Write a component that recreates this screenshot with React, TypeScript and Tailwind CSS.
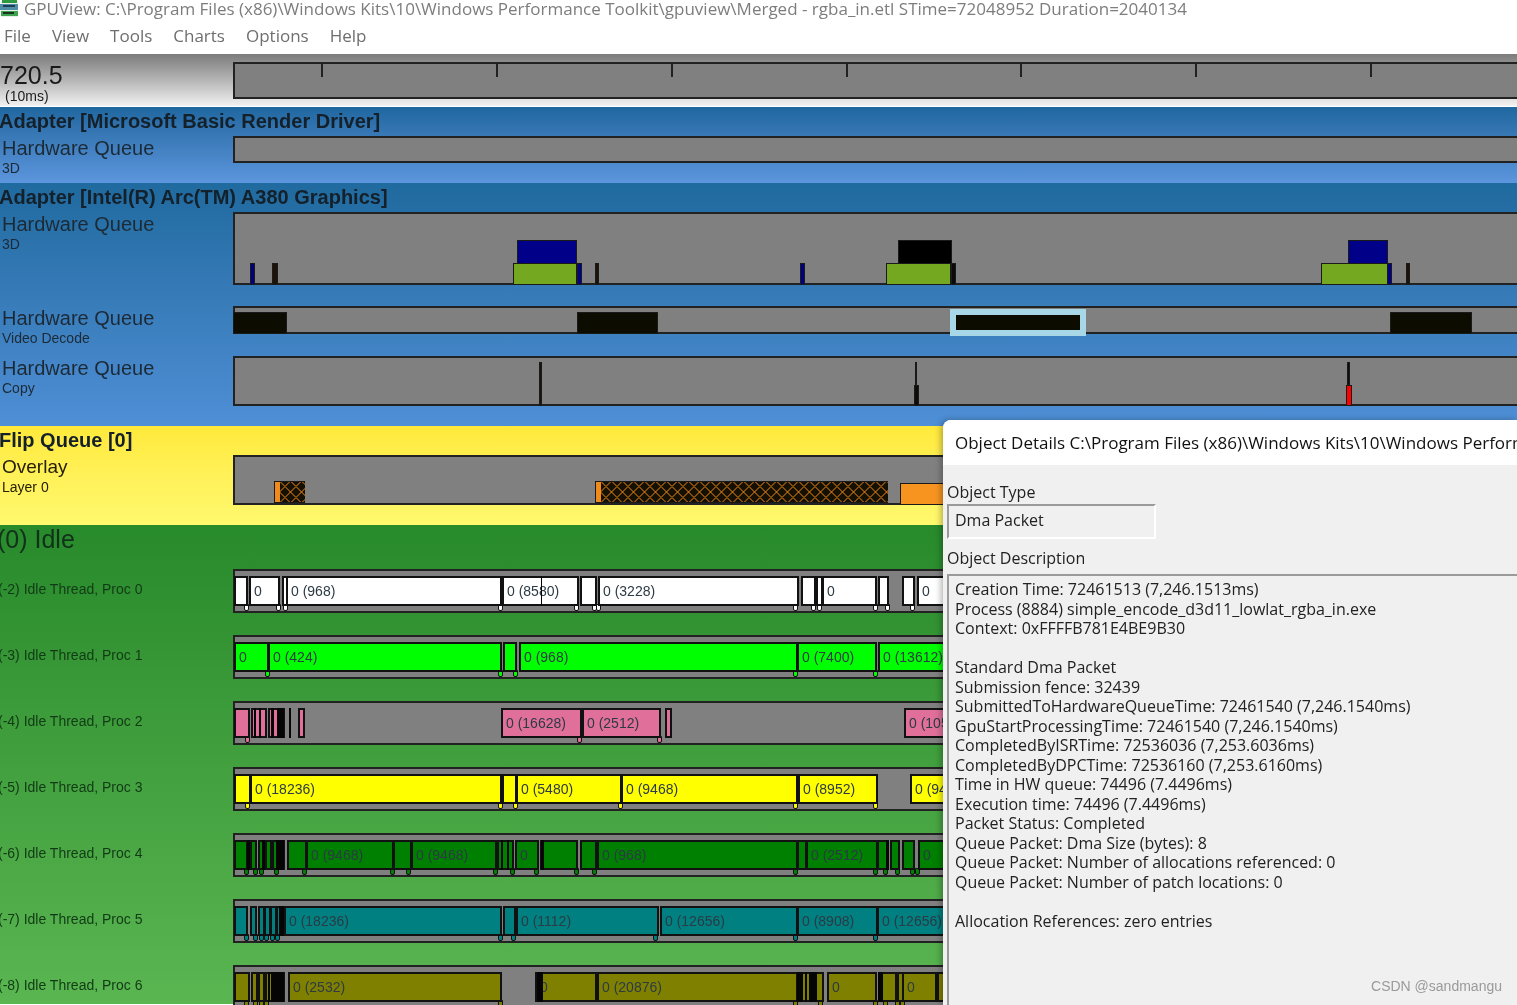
const SANS = "font-['Liberation_Sans',Arial,sans-serif]";
const UI = "font-['Open_Sans','Noto_Sans',sans-serif]";

type Seg = [number, number, string?];

const ticks = [322, 497, 672, 847, 1021, 1196, 1371];

const idleRows: {
  name: string;
  color: string;
  segs: Seg[];
  bars: [number, number][];
  marks: number[];
}[] = [
  {
    name: "(-2) Idle Thread, Proc 0",
    color: "#ffffff",
    segs: [
      [234, 247],
      [249, 279, "0"],
      [282, 285],
      [286, 501, "0 (968)"],
      [502, 578, "0 (8580)"],
      [580, 596],
      [598, 798, "0 (3228)"],
      [801, 815],
      [816, 821],
      [822, 876, "0"],
      [878, 888],
      [902, 914],
      [917, 960, "0"],
    ],
    bars: [[541, 542]],
    marks: [246, 278, 285, 500, 576, 594, 598, 795, 813, 819, 875, 887, 912],
  },
  {
    name: "(-3) Idle Thread, Proc 1",
    color: "#00ff00",
    segs: [
      [234, 268, "0"],
      [268, 501, "0 (424)"],
      [503, 516],
      [519, 797, "0 (968)"],
      [797, 876, "0 (7400)"],
      [878, 960, "0 (13612)"],
    ],
    bars: [],
    marks: [267, 500, 515, 795, 875],
  },
  {
    name: "(-4) Idle Thread, Proc 2",
    color: "#e0709a",
    segs: [
      [234, 249],
      [251, 266],
      [268, 284],
      [298, 302],
      [501, 581, "0 (16628)"],
      [582, 660, "0 (2512)"],
      [665, 669],
      [904, 960, "0 (10536)"],
    ],
    bars: [
      [254, 256],
      [259, 261],
      [271, 274],
      [277, 284],
      [289, 291],
    ],
    marks: [247, 579, 659],
  },
  {
    name: "(-5) Idle Thread, Proc 3",
    color: "#ffff00",
    segs: [
      [234, 250],
      [250, 501, "0 (18236)"],
      [502, 516],
      [516, 621, "0 (5480)"],
      [621, 797, "0 (9468)"],
      [798, 877, "0 (8952)"],
      [910, 960, "0 (9468)"],
    ],
    bars: [],
    marks: [247, 500, 515, 620, 795, 875],
  },
  {
    name: "(-6) Idle Thread, Proc 4",
    color: "#008000",
    segs: [
      [234, 247],
      [250, 256],
      [258, 263],
      [265, 270],
      [272, 284],
      [287, 306],
      [306, 393, "0 (9468)"],
      [393, 411],
      [411, 496, "0 (9468)"],
      [497, 513],
      [515, 538, "0"],
      [540, 577],
      [580, 596],
      [597, 797, "0 (968)"],
      [797, 806],
      [806, 877, "0 (2512)"],
      [877, 888],
      [890, 899],
      [902, 914],
      [918, 960, "0"],
    ],
    bars: [
      [247, 250],
      [262, 265],
      [276, 284],
      [501, 503],
      [507, 509],
      [541, 544],
      [886, 889],
    ],
    marks: [246, 255, 261, 276, 304, 392, 408, 495, 512, 536, 576, 594, 795, 875, 885, 897, 912, 917],
  },
  {
    name: "(-7) Idle Thread, Proc 5",
    color: "#008080",
    segs: [
      [234, 247],
      [250, 256],
      [258, 263],
      [264, 269],
      [270, 275],
      [276, 279],
      [284, 501, "0 (18236)"],
      [503, 515],
      [516, 658, "0 (1112)"],
      [660, 797, "0 (12656)"],
      [797, 877, "0 (8908)"],
      [877, 960, "0 (12656)"],
    ],
    bars: [[279, 284]],
    marks: [246, 255, 261, 266, 272, 277, 500, 513, 655, 795, 875],
  },
  {
    name: "(-8) Idle Thread, Proc 6",
    color: "#808000",
    segs: [
      [234, 249],
      [251, 256],
      [258, 263],
      [265, 284],
      [288, 501, "0 (2532)"],
      [535, 596, "0"],
      [597, 797, "0 (20876)"],
      [797, 823],
      [827, 876, "0"],
      [878, 896],
      [897, 902],
      [902, 936, "0"],
      [937, 960],
    ],
    bars: [
      [268, 270],
      [271, 284],
      [537, 543],
      [797, 803],
      [805, 807],
      [809, 817],
      [878, 883],
    ],
    marks: [246, 255, 261, 266, 500, 795, 820, 875, 885, 897, 902],
  },
];

const details = [
  "Creation Time: 72461513 (7,246.1513ms)",
  "Process (8884) simple_encode_d3d11_lowlat_rgba_in.exe",
  "Context: 0xFFFFB781E4BE9B30",
  "",
  "Standard Dma Packet",
  "Submission fence: 32439",
  "SubmittedToHardwareQueueTime: 72461540 (7,246.1540ms)",
  "GpuStartProcessingTime: 72461540 (7,246.1540ms)",
  "CompletedByISRTime: 72536036 (7,253.6036ms)",
  "CompletedByDPCTime: 72536160 (7,253.6160ms)",
  "Time in HW queue: 74496 (7.4496ms)",
  "Execution time: 74496 (7.4496ms)",
  "Packet Status: Completed",
  "Queue Packet: Dma Size (bytes): 8",
  "Queue Packet: Number of allocations referenced: 0",
  "Queue Packet: Number of patch locations: 0",
  "",
  "Allocation References: zero entries",
];

// x positions in the data are page coordinates, tracks start at 233
const Block = ({ x0, x1, top, bottom, color, className = "" }: { x0: number; x1: number; top: number; bottom: number; color: string; className?: string }) => (
  <div
    className={`absolute border border-[#1a1a1a] ${className}`}
    style={{ left: x0 - 235, width: x1 - x0, top, height: bottom - top, background: color }}
  />
);

const Hatch = ({ x0, x1 }: { x0: number; x1: number }) => (
  <svg className="absolute bottom-0" style={{ left: x0 - 235, width: x1 - x0 }} height="22">
    <defs>
      <pattern id={`hatch-${x0}`} width="11" height="11" patternUnits="userSpaceOnUse">
        <rect width="11" height="11" fill="#151000" />
        <path d="M0 5.5L5.5 0L11 5.5L5.5 11Z" fill="none" stroke="#f08a1c" strokeWidth="1" />
      </pattern>
    </defs>
    <rect width="100%" height="100%" fill={`url(#hatch-${x0})`} />
    <rect x="1" y="1" width="5" height="20" fill="#f08a1c" />
    <rect x="0.5" y="0.5" width="100%" height="21" fill="none" stroke="#1a1a1a" />
  </svg>
);

const Track = ({ height, children }: { height: number; children?: React.ReactNode }) => (
  <div className="relative ml-[233px] border-2 border-[#222] border-r-0 bg-[#808080]" style={{ height }}>
    {children}
  </div>
);

const Section = ({ title, className, children }: { title: string; className: string; children: React.ReactNode }) => (
  <div className={`relative overflow-hidden ${className}`}>
    <div className={`${SANS} -ml-px text-[20px] leading-[24px] font-bold text-[#14202a]`}>{title}</div>
    {children}
  </div>
);

const Label = ({ main, sub }: { main: string; sub: string }) => (
  <div className={`${SANS} absolute left-[2px] top-0 text-[#1c2a36]`}>
    <div className="text-[20px] leading-[24px]">{main}</div>
    <div className="text-[14px] leading-[16px]">{sub}</div>
  </div>
);

const IdleRow = ({ row }: { row: (typeof idleRows)[number] }) => (
  <div className="relative mb-[22px]">
    <div className={`${SANS} absolute -left-[2px] top-[11px] text-[14px] leading-[18px] whitespace-nowrap text-[#123a16]`}>{row.name}</div>
    <div className="relative ml-[233px] h-[44px] border-y-2 border-l-2 border-[#222] bg-[#808080]">
      {row.marks.map((m) => (
        <div
          key={m}
          className="absolute top-[33px] h-[7px] w-[5px] rounded-b-[2px] border border-[#111]"
          style={{ left: m - 237.5, background: row.color }}
        />
      ))}
      {row.segs.map(([x0, x1, label]) => (
        <div
          key={x0}
          className={`${SANS} absolute top-[5px] flex h-[30px] items-center overflow-hidden border-2 border-[#111] pl-[3px] text-[14px] whitespace-nowrap text-[#2c3a44]`}
          style={{ left: x0 - 235, width: x1 - x0 + 1, background: row.color }}
        >
          {label}
        </div>
      ))}
      {row.bars.map(([x0, x1]) => (
        <div key={x0} className="absolute top-[5px] h-[30px] bg-[#050505]" style={{ left: x0 - 235, width: x1 - x0 }} />
      ))}
    </div>
  </div>
);

const AppIcon = () => (
  <svg width="20" height="20" viewBox="0 0 20 20" className="shrink-0">
    <path d="M1 2h17v16H1z" fill="#e8efe8" />
    <path d="M2 0h15v4H2z" fill="#2d9a43" />
    <path d="M0 5h18v6H0z" fill="#4f8fa6" />
    <path d="M3 6h12v2H3z" fill="#1d3f5c" />
    <path d="M1 12h17v5H1z" fill="#3fa24c" />
    <path d="M3 13h11v2H3z" fill="#16351f" />
  </svg>
);

export default function App() {
  return (
    <div className="relative h-[1005px] w-[1517px] overflow-hidden bg-white blur-[0.35px]">
      <div className={`${UI} -mt-[2px] flex h-[22px] items-center gap-[4px] text-[17px] whitespace-nowrap text-[#7d7d7d]`}>
        <AppIcon />
        <span>GPUView: C:\Program Files (x86)\Windows Kits\10\Windows Performance Toolkit\gpuview\Merged - rgba_in.etl STime=72048952 Duration=2040134</span>
      </div>
      <div className={`${UI} flex h-[34px] items-center gap-[21px] pb-[2px] pl-[4px] text-[17px] text-[#6e6e6e]`}>
        <span>File</span>
        <span>View</span>
        <span>Tools</span>
        <span>Charts</span>
        <span>Options</span>
        <span>Help</span>
      </div>

      <div className="relative h-[53px] border-b border-white bg-linear-to-b from-[#7c7c7c] to-[#f2f2f2] pt-[8px]">
        <div className={`${SANS} absolute left-0 top-[7px] text-[25px] leading-[28px] text-[#1a1a1a]`}>720.5</div>
        <div className={`${SANS} absolute left-[5px] top-[34px] text-[14px] leading-[16px] text-[#1a1a1a]`}>(10ms)</div>
        <Track height={37}>
          {ticks.map((t) => (
            <div key={t} className="absolute top-0 h-[13px] w-[2px] bg-[#222]" style={{ left: t - 236 }} />
          ))}
        </Track>
      </div>

      <Section title="Adapter [Microsoft Basic Render Driver]" className="h-[76px] bg-linear-to-b from-[#1f679f] to-[#5c96de] pt-[2px]">
        <div className="relative mt-[3px]">
          <Label main="Hardware Queue" sub="3D" />
          <Track height={27} />
        </div>
      </Section>

      <Section title="Adapter [Intel(R) Arc(TM) A380 Graphics]" className="h-[243px] bg-linear-to-b from-[#1f6a9f] to-[#4f8fd6] pt-[2px]">
        <div className="relative mt-[3px]">
          <Label main="Hardware Queue" sub="3D" />
          <Track height={73}>
            <Block x0={250} x1={255} top={49} bottom={71} color="#000080" />
            <Block x0={272} x1={278} top={49} bottom={71} color="#1c1208" />
            <Block x0={517} x1={577} top={26} bottom={50} color="#000088" />
            <Block x0={577} x1={582} top={49} bottom={71} color="#000088" />
            <Block x0={513} x1={577} top={49} bottom={71} color="#74a820" />
            <Block x0={595} x1={599} top={49} bottom={71} color="#1c1208" />
            <Block x0={800} x1={805} top={49} bottom={71} color="#000080" />
            <Block x0={898} x1={952} top={26} bottom={50} color="#000000" />
            <Block x0={951} x1={956} top={49} bottom={71} color="#0a0a0a" />
            <Block x0={886} x1={951} top={49} bottom={71} color="#74a820" />
            <Block x0={1348} x1={1388} top={26} bottom={50} color="#000088" />
            <Block x0={1387} x1={1392} top={49} bottom={71} color="#000088" />
            <Block x0={1321} x1={1388} top={49} bottom={71} color="#74a820" />
            <Block x0={1406} x1={1410} top={49} bottom={71} color="#1c1208" />
          </Track>
        </div>
        <div className="relative mt-[21px]">
          <Label main="Hardware Queue" sub="Video Decode" />
          <Track height={28}>
            <Block x0={233} x1={287} top={4} bottom={26} color="#0c0c00" />
            <Block x0={577} x1={658} top={4} bottom={26} color="#0c0c00" />
            <Block x0={1390} x1={1472} top={4} bottom={26} color="#0c0c00" />
          </Track>
        </div>
        <div className="relative mt-[22px]">
          <Label main="Hardware Queue" sub="Copy" />
          <Track height={50}>
            <Block x0={539} x1={542} top={4} bottom={48} color="#1c1208" />
            <Block x0={915} x1={917} top={4} bottom={27} color="#1c1208" />
            <Block x0={914} x1={919} top={27} bottom={48} color="#100c08" />
            <Block x0={1347} x1={1350} top={4} bottom={27} color="#100c08" />
            <Block x0={1346} x1={1352} top={27} bottom={48} color="#ff0000" />
          </Track>
        </div>
        {/* selected packet */}
        <div className="absolute left-[950px] top-[126px] h-[27px] w-[136px] border-[6px] border-[#a8d8e8] bg-[#0c0c00]" />
      </Section>

      <Section title="Flip Queue [0]" className="h-[99px] bg-linear-to-b from-[#ffe93a] to-[#fff96e] pt-[2px]">
        <div className="relative mt-[3px]">
          <div className={`${SANS} absolute left-[2px] top-0 text-[#26200a]`}>
            <div className="text-[19px] leading-[24px]">Overlay</div>
            <div className="text-[14px] leading-[16px]">Layer 0</div>
          </div>
          <Track height={50}>
            <Hatch x0={274} x1={305} />
            <Hatch x0={595} x1={888} />
            <Block x0={900} x1={960} top={26} bottom={48} color="#f79420" />
          </Track>
        </div>
      </Section>

      <div className="h-[479px] bg-linear-to-b from-[#278a2b] to-[#5ab651]">
        <div className={`${SANS} -ml-[3px] h-[44px] text-[25px] leading-[29px] text-[#12301a]`}>(0) Idle</div>
        {idleRows.map((row) => (
          <IdleRow key={row.name} row={row} />
        ))}
      </div>

      {/* Object Details window */}
      <div className="absolute left-[943px] top-[420px] flex h-[585px] w-[574px] flex-col overflow-hidden rounded-tl-[8px] bg-[#f0f0f0] shadow-[-2px_0_6px_rgba(0,0,0,0.3)]">
        <div className={`${UI} flex h-[45px] shrink-0 items-center bg-white pl-[12px] text-[17px] whitespace-nowrap text-[#111]`}>
          Object Details C:\Program Files (x86)\Windows Kits\10\Windows Performance Toolkit\gpuview\Merged
        </div>
        <div className={`${UI} flex min-h-0 flex-1 flex-col pl-[4px] text-[16px] text-[#222]`}>
          <div className="mt-[16px] h-[23px] leading-[22px]">Object Type</div>
          <div className="h-[35px] w-[209px] border-2 border-[#9a9a9a] border-r-white border-b-white pl-[6px] leading-[28px]">Dma Packet</div>
          <div className="mt-[8px] h-[27px] leading-[22px]">Object Description</div>
          <div className="min-h-0 flex-1 border-2 border-[#9a9a9a] border-r-0 border-b-0 pl-[6px] pt-[4px]">
            {details.map((line, i) => (
              <div key={i} className="h-[19.5px] leading-[19.5px] whitespace-nowrap">
                {line}
              </div>
            ))}
          </div>
        </div>
        <div className={`${SANS} absolute right-[15px] bottom-[8px] text-[14px] text-[#9a9a9a]`}>CSDN @sandmangu</div>
      </div>
    </div>
  );
}
